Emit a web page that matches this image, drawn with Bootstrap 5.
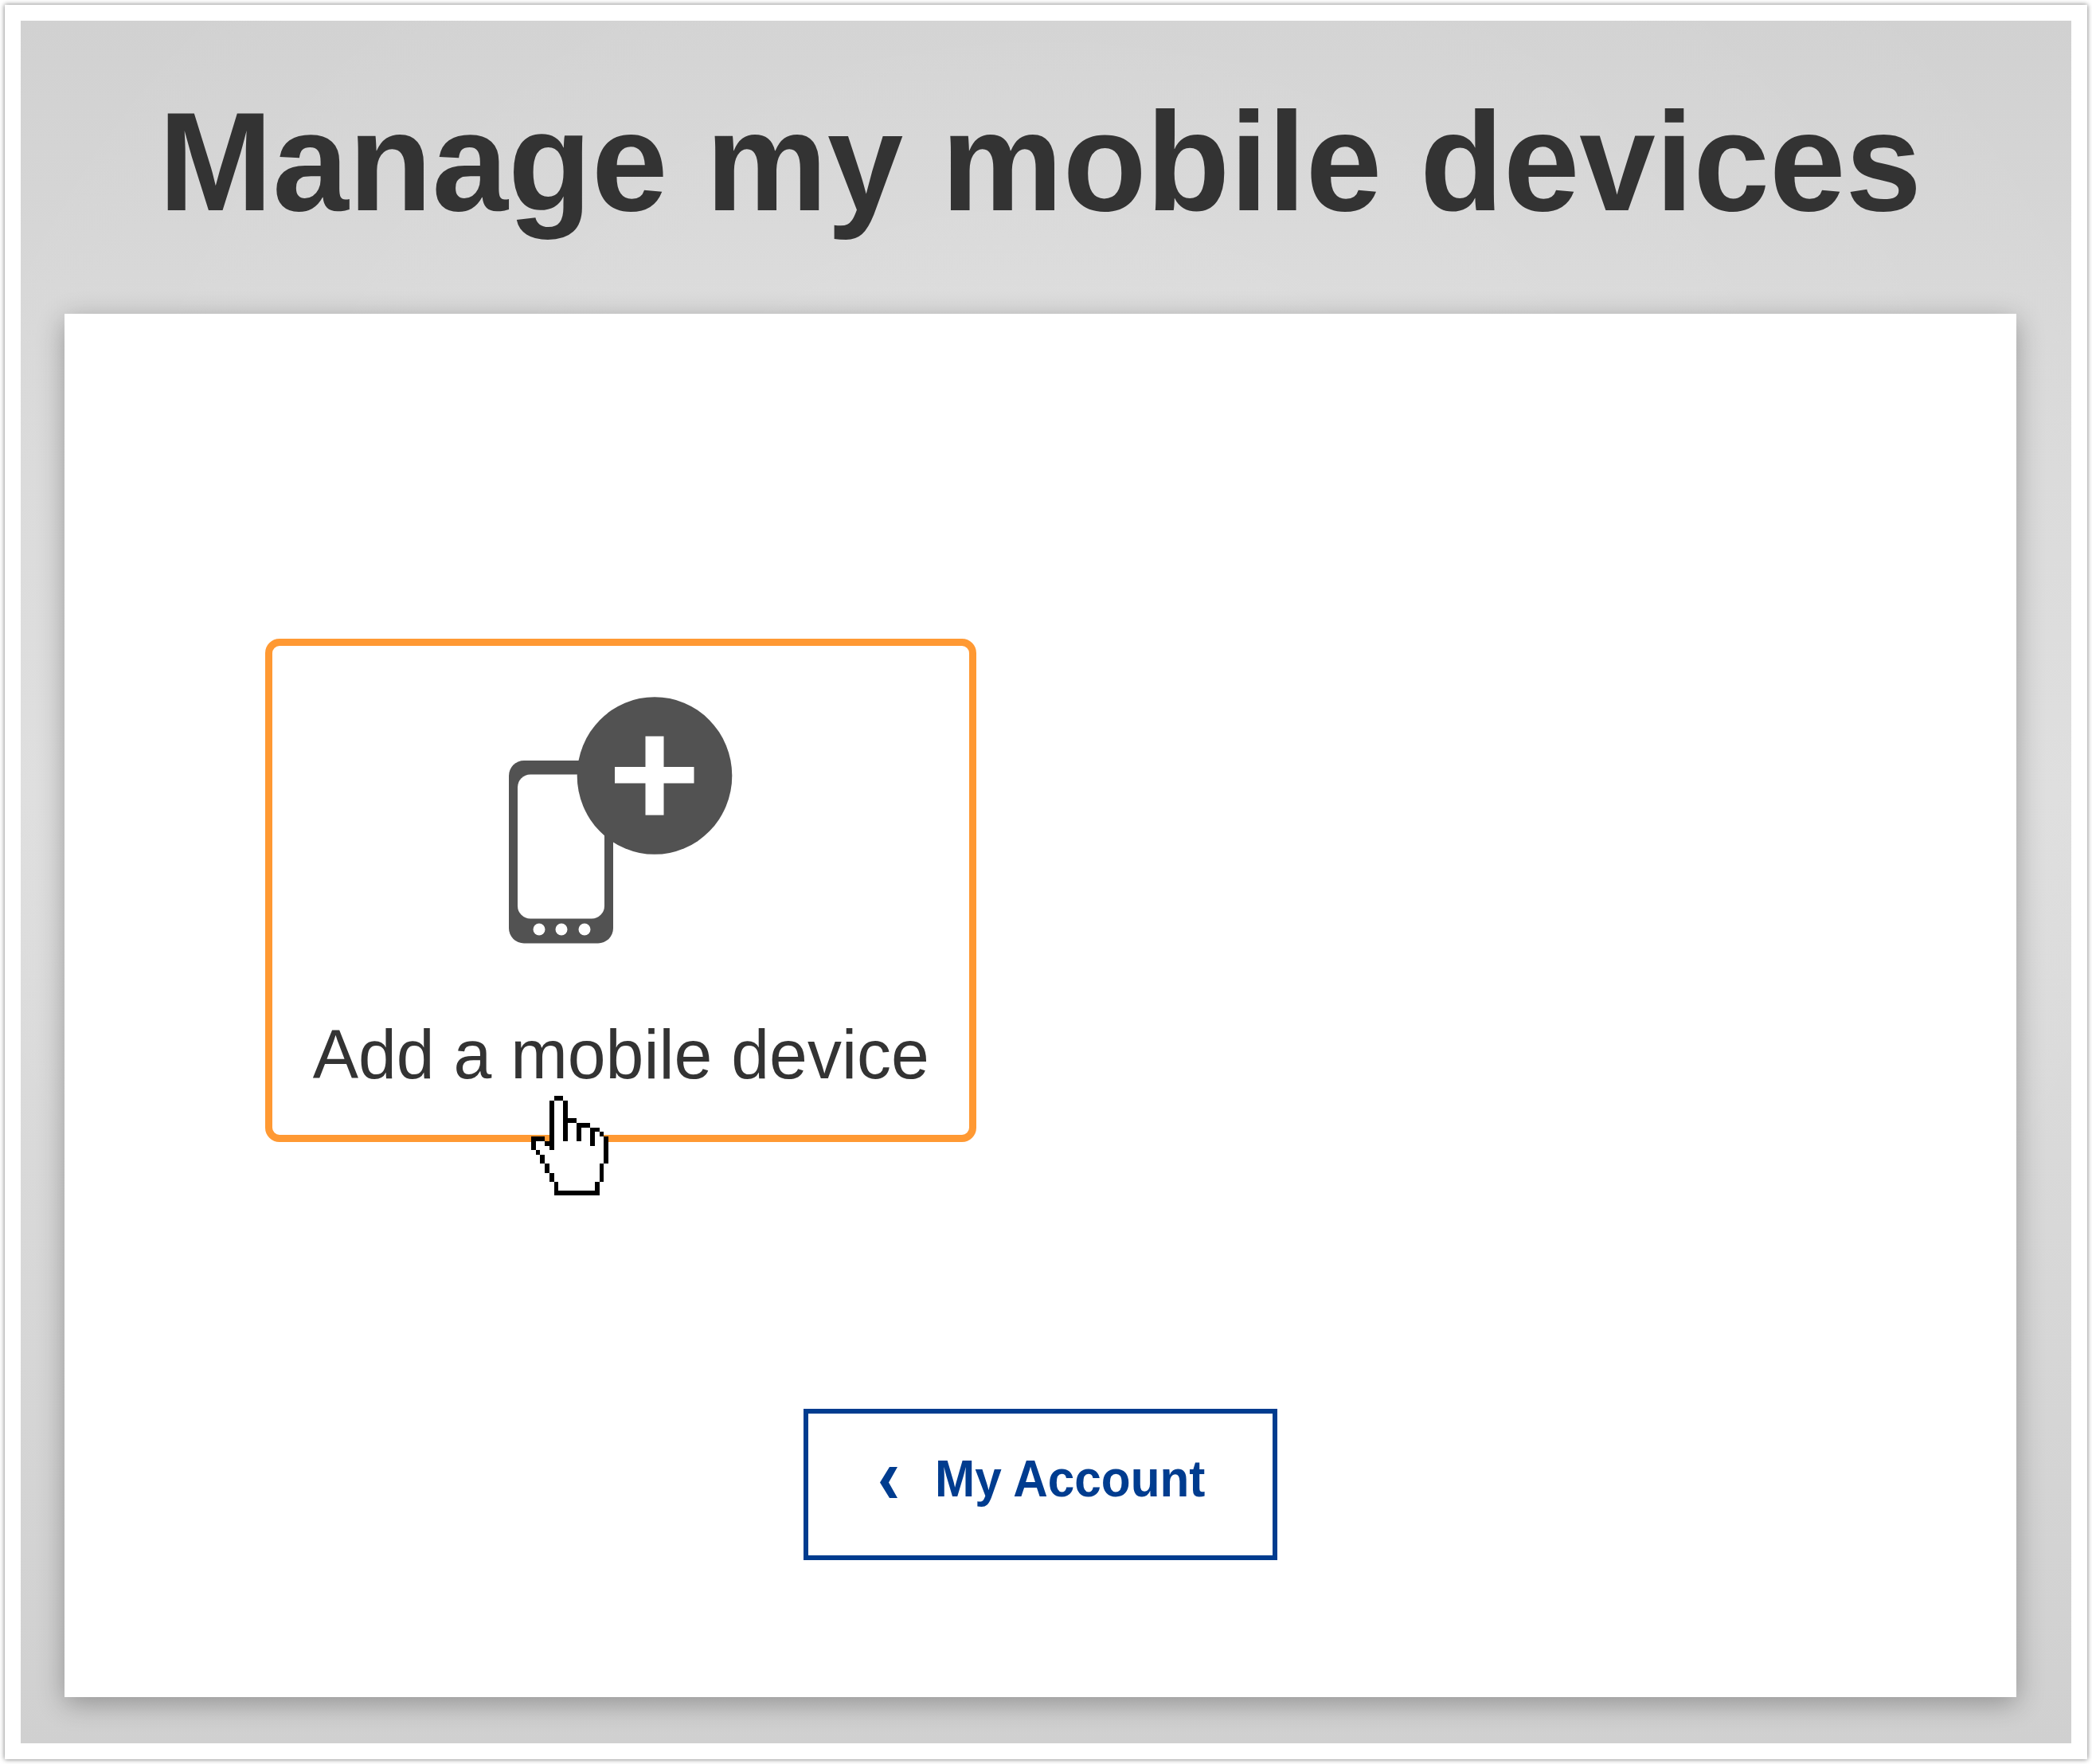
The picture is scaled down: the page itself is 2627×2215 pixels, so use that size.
<!DOCTYPE html>
<html lang="en">
<head>
  <meta charset="UTF-8">
  <meta name="viewport" content="width=device-width, initial-scale=1.0">
  <link href="https://cdn.jsdelivr.net/npm/bootstrap@5.3.0/dist/css/bootstrap.min.css" rel="stylesheet">
  <style>
    body {
      font-family: "Liberation Sans", Arial, sans-serif;
      color: #333;
      height: 2215px;
      padding: 6px;
      overflow: hidden;
    }
    .frame {
      width: 2615px;
      height: 2203px;
      padding: 20px;
      box-shadow: 0 0 6px rgba(0, 0, 0, .55);
    }
    .page-bg {
      padding: 0 69px 0 55px;
      background:
        radial-gradient(ellipse 1500px 1300px at 50% 38%, rgba(255, 255, 255, .2), rgba(255, 255, 255, 0)),
        linear-gradient(#d1d1d1 0, #d8d8d8 17%, #dedede 45%, #d8d8d8 70%, #d0d0d0 100%);
    }
    .page-title {
      height: 368px;
      padding-top: 69px;
      font-size: 177px;
      font-weight: 700;
      line-height: 216px;
      white-space: nowrap;
    }
    .page-title span,
    .tile-label span,
    .back-label {
      display: inline-block;
      transform: scaleX(.97);
    }
    .panel {
      height: 1737px;
      padding: 408px 0 0 252px;
      box-shadow: 0 8px 32px rgba(0, 0, 0, .3);
    }
    .device-tile {
      width: 893px;
      height: 632px;
      border: 9px solid #ff9933;
      border-radius: 18px;
      padding-top: 64px;
    }
    .tile-label {
      margin-top: 82px;
      font-size: 87px;
      line-height: 114px;
      white-space: nowrap;
    }
    .tile-label span { transform: scaleX(.988); }
    .pointer {
      top: 565px;
      left: 325px;
    }
    .btn-back {
      --bs-btn-color: #003c8f;
      --bs-btn-border-color: #003c8f;
      --bs-btn-border-width: 6px;
      --bs-btn-border-radius: 0;
      width: 595px;
      height: 190px;
      margin: 335px 0 0 676px;
      padding: 0 0 14px 90px;
      font-size: 64px;
      font-weight: 700;
    }
    .back-label {
      margin-left: 47px;
      transform: scaleX(.942);
      transform-origin: left;
      white-space: nowrap;
    }
  </style>
  <title>Manage my mobile devices</title>
</head>
<body>
  <div class="frame bg-white">
    <main class="page-bg h-100">
      <h1 class="page-title d-flex justify-content-center mb-0"><span>Manage my mobile devices</span></h1>

      <section class="panel bg-white">
        <div class="device-tile position-relative d-flex flex-column align-items-center">
          <!-- phone with plus badge -->
          <svg width="282" height="310" viewBox="639 875 282 310">
            <rect x="639" y="955" width="131" height="229.5" rx="19" fill="#525252"/>
            <rect x="650" y="972.5" width="109" height="181" rx="16" fill="#fff"/>
            <circle cx="677" cy="1167" r="7.5" fill="#fff"/>
            <circle cx="705" cy="1167" r="7.5" fill="#fff"/>
            <circle cx="734" cy="1167" r="7.5" fill="#fff"/>
            <ellipse cx="822" cy="974" rx="97.3" ry="98.8" fill="#525252"/>
            <path d="M810.5 924.5h23V963h38v20.500h-38v40h-23v-40H772V963h38.500z" fill="#fff"/>
          </svg>
          <div class="tile-label"><span>Add a mobile device</span></div>

          <!-- hand pointer, 17 x 22 cells -->
          <svg class="pointer position-absolute" width="97" height="125" viewBox="0 0 17 22" preserveAspectRatio="none" shape-rendering="crispEdges">
            <path fill="#fff" d="M5 0h2v1h1v4h2v1h3v1h2v1h1v1h1v6h-1v4h-1v3H5v-3H4v-2H3v-2H2v-2H1v-1H0V9h3v1h1V1h1z"/>
            <path d="M5 0h2v1H5zM4 1h1v11H4zM7 1h1v9H7zM8 5h2v1H8zM10 6h3v1h-2v3h-1zM13 7h2v1h-1v3h-1zM15 8h1v1h-1zM16 9h1v6h-1zM15 15h1v4h-1zM14 19h1v3H5v-3h1v2h8zM4 17h1v2H4zM3 15h1v2H3zM2 13h1v2H2zM1 12h1v1H1zM0 9h3v1H1v2H0zM3 10h1v1H3z"/>
          </svg>
        </div>

        <a href="#" class="btn btn-back d-flex align-items-center">
          <svg width="22" height="39" viewBox="0 0 22 39" class="mt-2"><path d="M12 0h10L11 19.500 22 39H12L0 19.500z" fill="currentColor"/></svg>
          <span class="back-label">My Account</span>
        </a>
      </section>
    </main>
  </div>

  <script src="https://cdn.jsdelivr.net/npm/bootstrap@5.3.0/dist/js/bootstrap.bundle.min.js"></script>
</body>
</html>
